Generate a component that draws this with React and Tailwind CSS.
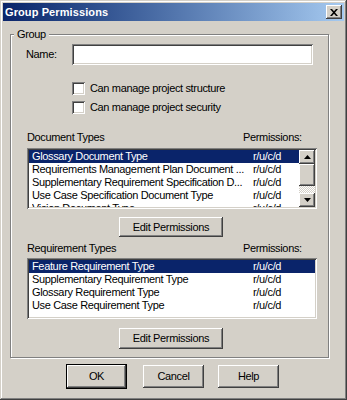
const raised = "shadow-[inset_-1px_-1px_#404040,inset_1px_1px_#ffffff,inset_-2px_-2px_#808080,inset_2px_2px_#d4d0c8]";
const sunken = "shadow-[inset_1px_1px_#808080,inset_-1px_-1px_#ffffff,inset_2px_2px_#404040,inset_-2px_-2px_#d4d0c8]";

const docTypes = [
  "Glossary Document Type",
  "Requirements Management Plan Document ...",
  "Supplementary Requirement Specification D...",
  "Use Case Specification Document Type",
  "Vision Document Type",
];

const reqTypes = [
  "Feature Requirement Type",
  "Supplementary Requirement Type",
  "Glossary Requirement Type",
  "Use Case Requirement Type",
];

function Arrow({ down }) {
  return (
    <svg width="7" height="4" viewBox="0 0 7 4">
      <polygon points={down ? "0,0 7,0 3.5,4" : "3.5,0 7,4 0,4"} fill="#000" />
    </svg>
  );
}

function Rows({ items }) {
  return (
    <div className="flex-1 overflow-hidden">
      {items.map((name, i) => (
        <div
          key={name}
          className={`h-[13px] leading-[13px] grid grid-cols-[221px_1fr] pl-[3px] whitespace-nowrap ${i === 0 ? "bg-[#0a246a] text-white" : ""}`}
        >
          <span className="overflow-hidden">{name}</span>
          <span>r/u/c/d</span>
        </div>
      ))}
    </div>
  );
}

function Button({ children, className = "" }) {
  return (
    <button className={`bg-[#d4d0c8] ${raised} flex items-center justify-center leading-[13px] ${className}`}>
      {children}
    </button>
  );
}

function Checkbox({ label, className = "" }) {
  return (
    <div className={`flex items-center gap-[5px] h-[13px] ml-[61px] ${className}`}>
      <span className={`w-[13px] h-[13px] bg-white ${sunken}`} />
      <span className="leading-[13px]">{label}</span>
    </div>
  );
}

export default function App() {
  return (
    <div className="w-[347px] h-[400px] bg-[#d4d0c8] p-[3px] flex flex-col text-[11px] tracking-[-0.35px] text-black font-['Liberation_Sans',Arial,sans-serif] shadow-[inset_-1px_-1px_#404040,inset_1px_1px_#d4d0c8,inset_-2px_-2px_#808080,inset_2px_2px_#ffffff]">
      {/* title bar */}
      <div className="h-[18px] flex items-center justify-between px-[2px] bg-gradient-to-r from-[#0a246a] to-[#a6caf0]">
        <span className="text-white font-bold text-[11px] tracking-[0.1px] leading-[14px]">Group Permissions</span>
        <button className={`w-[16px] h-[14px] bg-[#d4d0c8] ${raised} flex items-center justify-center`}>
          <svg width="8" height="7" viewBox="0 0 8 7">
            <path d="M0 0h2l2 2.3 2-2.3h2l-3 3.5 3 3.5h-2l-2-2.3-2 2.3h-2l3-3.5z" fill="#000" />
          </svg>
        </button>
      </div>

      {/* group box */}
      <div className="relative mt-[13px] ml-[7px] w-[319px] h-[324px] border border-[#808080] shadow-[inset_1px_1px_#ffffff,1px_1px_#ffffff] flex flex-col">
        <span className="absolute left-[3px] -top-[7px] px-[3px] bg-[#d4d0c8] leading-[13px]">Group</span>

        <div className="mt-[9px] h-[21px] flex items-center pl-[15px]">
          <span className="w-[46px] leading-[13px]">Name:</span>
          <div className={`w-[241px] h-[21px] bg-white ${sunken}`} />
        </div>

        <Checkbox label="Can manage project structure" className="mt-[17px]" />
        <Checkbox label="Can manage project security" className="mt-[6px]" />

        <div className="mt-[17px] ml-[16px] h-[13px] leading-[13px] grid grid-cols-[216px_auto]">
          <span>Document Types</span>
          <span>Permissions:</span>
        </div>
        <div className={`mt-[4px] ml-[16px] w-[290px] h-[61px] bg-white p-[2px] flex ${sunken}`}>
          <Rows items={docTypes} />
          <div className="w-[16px] flex flex-col">
            <div className={`h-[14px] bg-[#d4d0c8] ${raised} flex items-center justify-center`}>
              <Arrow />
            </div>
            <div className={`h-[22px] bg-[#d4d0c8] ${raised}`} />
            <div className="flex-1 bg-[conic-gradient(#ffffff_25%,#d4d0c8_0_50%,#ffffff_0_75%,#d4d0c8_0)] bg-[length:2px_2px]" />
            <div className={`h-[14px] bg-[#d4d0c8] ${raised} flex items-center justify-center`}>
              <Arrow down />
            </div>
          </div>
        </div>
        <Button className="mt-[8px] ml-[108px] w-[104px] h-[20px]">Edit Permissions</Button>

        <div className="mt-[5px] ml-[16px] h-[13px] leading-[13px] grid grid-cols-[216px_auto]">
          <span>Requirement Types</span>
          <span>Permissions:</span>
        </div>
        <div className={`mt-[3px] ml-[16px] w-[290px] h-[61px] bg-white p-[2px] flex ${sunken}`}>
          <Rows items={reqTypes} />
        </div>
        <Button className="mt-[9px] ml-[108px] w-[104px] h-[21px]">Edit Permissions</Button>
      </div>

      {/* dialog buttons */}
      <div className="mt-[6px] ml-[63px] flex items-center">
        <div className="w-[61px] h-[25px] border border-black flex">
          <Button className="flex-1">OK</Button>
        </div>
        <Button className="ml-[16px] w-[61px] h-[23px]">Cancel</Button>
        <Button className="ml-[14px] w-[61px] h-[23px]">Help</Button>
      </div>
    </div>
  );
}
